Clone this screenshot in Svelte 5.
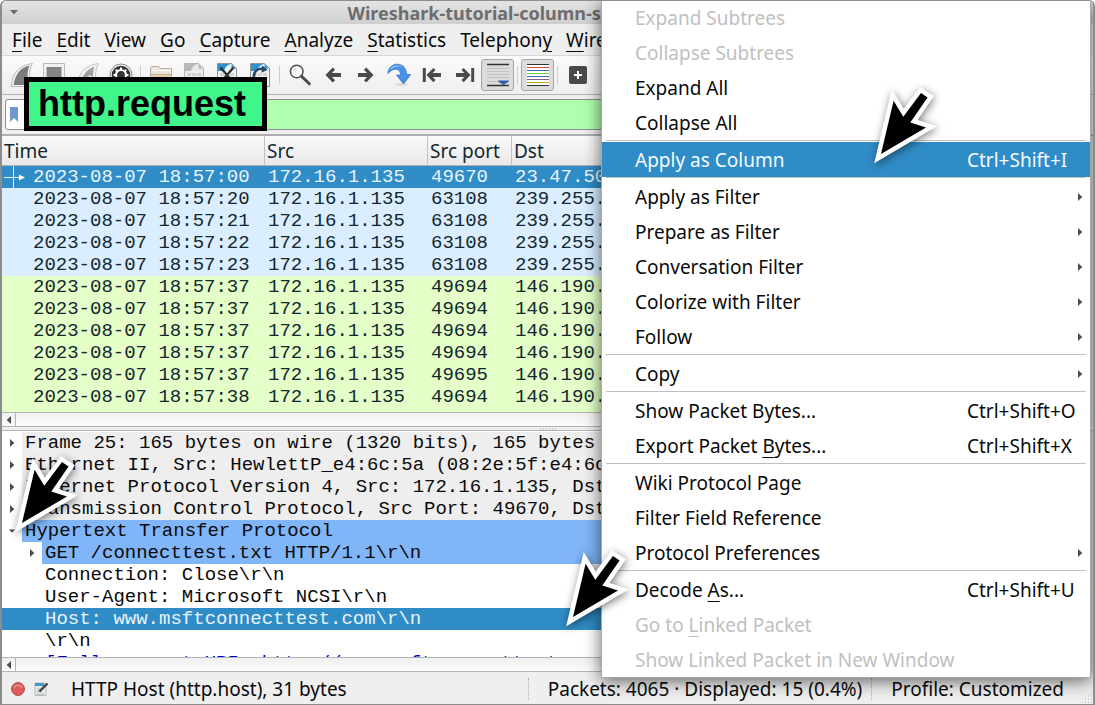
<script>
  const menus = [
    ['F', 'ile', ''], ['E', 'dit', ''], ['V', 'iew', ''], ['G', 'o', ''], ['C', 'apture', ''],
    ['A', 'nalyze', ''], ['S', 'tatistics', ''], ['y', '', 'Telephon'], ['W', 'ireless', '']
  ];

  const tools = [
    'start', 'stop', 'restart', 'options', '|', 'open', 'save', 'close', 'reload', '|',
    'find', 'back', 'forward', 'jump', 'first', 'last', 'autoscroll', '|', 'colorize', '|', 'add'
  ];

  const rows = [
    ['00', '49670', '23.47.50', 'sel'],
    ['20', '63108', '239.255.', 'udp'],
    ['21', '63108', '239.255.', 'udp'],
    ['22', '63108', '239.255.', 'udp'],
    ['23', '63108', '239.255.', 'udp'],
    ['37', '49694', '146.190.', 'http'],
    ['37', '49694', '146.190.', 'http'],
    ['37', '49694', '146.190.', 'http'],
    ['37', '49694', '146.190.', 'http'],
    ['37', '49695', '146.190.', 'http'],
    ['38', '49694', '146.190.', 'http']
  ];

  const tree = [
    { t: 'Frame 25: 165 bytes on wire (1320 bits), 165 bytes', k: 'proto', a: 'right' },
    { t: 'Ethernet II, Src: HewlettP_e4:6c:5a (08:2e:5f:e4:6c', k: 'proto', a: 'right' },
    { t: 'Internet Protocol Version 4, Src: 172.16.1.135, Dst', k: 'proto', a: 'right' },
    { t: 'Transmission Control Protocol, Src Port: 49670, Dst', k: 'proto', a: 'right' },
    { t: 'Hypertext Transfer Protocol', k: 'hit', a: 'down' },
    { t: 'GET /connecttest.txt HTTP/1.1\\r\\n', k: 'hit', a: 'right', d: 1 },
    { t: 'Connection: Close\\r\\n', k: '', d: 1 },
    { t: 'User-Agent: Microsoft NCSI\\r\\n', k: '', d: 1 },
    { t: 'Host: www.msftconnecttest.com\\r\\n', k: 'sel', d: 1 },
    { t: '\\r\\n', k: '', d: 1 },
    { t: '[Full request URI: http://www.msftconnecttest.com', k: 'link', d: 1 }
  ];

  // l: label, u: mnemonic letter, r: rest of the label
  const context = [
    { l: 'Expand Subtrees', off: true },
    { l: 'Collapse Subtrees', off: true },
    { l: 'Expand All' },
    { l: 'Collapse All' },
    null,
    { l: 'Apply as Column', key: 'Ctrl+Shift+I', on: true },
    null,
    { l: 'Apply as Filter', sub: true },
    { l: 'Prepare as Filter', sub: true },
    { l: 'Conversation Filter', sub: true },
    { l: 'Colorize with Filter', sub: true },
    { l: 'Follow', sub: true },
    null,
    { l: 'Copy', sub: true },
    null,
    { l: 'Show Packet Bytes...', key: 'Ctrl+Shift+O' },
    { l: 'Export Packet ', u: 'B', r: 'ytes...', key: 'Ctrl+Shift+X' },
    null,
    { l: 'Wiki Protocol Page' },
    { l: 'Filter Field Reference' },
    { l: 'Protocol Preferences', sub: true },
    null,
    { l: 'Decode ', u: 'A', r: 's...', key: 'Ctrl+Shift+U' },
    { l: 'Go to ', u: 'L', r: 'inked Packet', off: true },
    { l: 'Show Linked Packet in New Window', off: true }
  ];
</script>

{#snippet tri(dir)}
  <svg class="tri" width="6" height="8" viewBox="0 0 6 8" aria-hidden="true">
    {#if dir === 'right'}<path d="M1 0 5.300 4 1 8z" fill="#4c4c4c" />
    {:else if dir === 'left'}<path d="M5 0 .7 4 5 8z" fill="#4c4c4c" />
    {:else}<path d="M0 2.500h6L3 5.800z" fill="#4c4c4c" />{/if}
  </svg>
{/snippet}

{#snippet sheet(tint)}
  <path d="M2.500 .5h14l5 5v18h-19z" fill={tint === 'grey' ? '#ededed' : '#f3f5f2'} stroke={tint === 'grey' ? '#b4b4b4' : '#8b9499'} />
  <path d="M3 1h13.300l4.700 4.700V8H3z" fill={tint === 'grey' ? '#b9b9b9' : '#2d93c8'} />
  <path d="M9 8c1-3.500 3-6 6.500-7h1v4.500h4.500V8z" fill={tint === 'grey' ? '#e9e9e9' : '#e8f2f8'} />
  <path d="M6 10v3m2-3v3m3-3v3m2-3v3m3-3v3m2-3v3M6 15v3m2-3v3m3-3v3m2-3v3m3-3v3m2-3v3" stroke="#b0b0b0" />
{/snippet}

{#snippet arrow(flip)}
  <path transform={flip ? 'matrix(-1 0 0 1 24 0)' : null} d="M4.500 12 11.700 4.600l2.400 2.200-3.200 3.300H20v3.900h-9.100l3.200 3.300-2.400 2.200z" fill="#4b4b4b" />
{/snippet}

{#snippet pointer()}
  <path
    d="M12 72 24.600 18.700 34.300 34.700 52 11 58.600 15.400 41.300 40.400 57 45.400z"
    fill="#000" stroke="#fff" stroke-width="9" stroke-miterlimit="10" paint-order="stroke"
  />
{/snippet}

<main class="window">
  <header class="titlebar">
    <svg width="8" height="5" viewBox="0 0 8 5" aria-hidden="true"><path d="M0 0h8L4 4.600z" fill="#6c6c6c" /></svg>
    <h1>Wireshark-tutorial-column-setup-filters.pcap</h1>
  </header>

  <nav class="menubar">
    {#each menus as [u, rest, pre]}
      <button type="button">{pre}<u>{u}</u>{rest}</button>
    {/each}
  </nav>

  <div class="toolbar" role="toolbar" aria-label="Main toolbar">
    {#each tools as t}
      {#if t === '|'}
        <span class="sep"></span>
      {:else}
        <button type="button" aria-label={t} class:pressed={t === 'autoscroll' || t === 'colorize'}>
          <svg width="24" height="24" viewBox="0 0 24 24" fill="none" aria-hidden="true">
            {#if t === 'start'}
              <path d="M1 23.500C2.500 10 9 2 22.500.5 19 6 18.500 16 22 23.500z" fill="#f2f2f2" stroke="#b9b9b9" />
              <path d="M3.500 22C5.500 11 10 5 19.500 2.500 17 8 17 15 19 22z" fill="#7c7c7c" />
            {:else if t === 'stop'}
              <path d="M.5.5h21v23H.5z" fill="#f2f2f2" stroke="#b9b9b9" />
              <path d="M3.500 4h15v17h-15z" fill="#848484" />
            {:else if t === 'restart'}
              <path d="M1 23.500C2.500 10 9 2 22.500.5 19 6 18.500 16 22 23.500z" fill="#f2f2f2" stroke="#c4c4c4" />
              <path d="M4 21C6 13 11 6 18.500 3.500 17 7 17 12 17 15c-1-2-3-3-4.500-2.500l.5 3.500-6-1z" fill="#a0a0a0" />
            {:else if t === 'options'}
              <circle cx="12" cy="12" r="11" fill="#f4f4f4" stroke="#8a8a8a" />
              <circle cx="12" cy="12" r="9.300" fill="#333" />
              <circle cx="12" cy="12" r="5" stroke="#fff" stroke-width="2.200" />
              <path d="M12 4.500v3m0 9v3M4.500 12h3m9 0h3M6.700 6.700l2.100 2.100m6.400 6.400 2.100 2.100m0-10.600-2.100 2.100m-6.400 6.400-2.100 2.100" stroke="#fff" stroke-width="2" />
            {:else if t === 'open'}
              <path d="M1.500 22V4.500l1-1h7l2 2h11V22z" fill="#ece4d6" stroke="#b5aea4" />
              <path d="M3 7.500h18.500" stroke="#fff" />
              <path d="M2 11h20v11H2z" fill="#e3cfa8" />
              <path d="M2 11.500h20" stroke="#c9b48c" />
            {:else if t === 'save'}
              {@render sheet('grey')}
            {:else if t === 'close'}
              {@render sheet('blue')}
              <path d="m5.500 4.500 13 15m0-15-13 15" stroke="#2b3338" stroke-width="2.400" />
            {:else if t === 'reload'}
              {@render sheet('blue')}
              <path d="M17.500 7C11 3.500 5 8 6 15l3 4" stroke="#27476b" stroke-width="2.600" />
              <path d="m14 2.500 5.500 4.200-6 3z" fill="#27476b" />
            {:else if t === 'find'}
              <circle cx="8.700" cy="8.500" r="6.300" fill="#fafafa" stroke="#555" stroke-width="1.600" />
              <path d="M5.500 7.500c.5-1.500 1.500-2.300 3-2.500" stroke="#bbb" />
              <path d="m13.500 13.200 7.800 7.600" stroke="#484848" stroke-width="3" stroke-linecap="round" />
            {:else if t === 'back'}
              {@render arrow(false)}
            {:else if t === 'forward'}
              {@render arrow(true)}
            {:else if t === 'jump'}
              <ellipse cx="14" cy="21.500" rx="7" ry="1.500" fill="#dcdcdc" />
              <path d="M.8 10.500C1.500 4.500 5.500 1 10.500 1.200c5.500.2 9 4.500 9.200 10.300h4L16.500 21l-7-9h4c0-3.500-1.500-5.500-4.500-5.700C6 6 4 7.500.8 10.500z" fill="#4a92e6" stroke="#2c6fc4" stroke-width=".7" />
              <path d="M2.500 7.500C5 2 12 .7 16 5c-4-2.500-9-2-13.500 2.500z" fill="#a3cbf7" />
            {:else if t === 'first'}
              <path d="M4.300 5v14" stroke="#4b4b4b" stroke-width="3" />
              <path d="M6.500 12 13.300 4.900l2.300 2.100-3 3.100H21v3.900h-8.400l3 3.100-2.300 2.100z" fill="#4b4b4b" />
            {:else if t === 'last'}
              <path d="M19.700 5v14" stroke="#4b4b4b" stroke-width="3" />
              <path d="M17.500 12 10.700 4.900 8.400 7l3 3.100H3v3.900h8.400l-3 3.100 2.300 2.100z" fill="#4b4b4b" />
            {:else if t === 'autoscroll'}
              <path d="M1 1.500h22m-22 21h22" stroke="#2e3436" stroke-width="1.500" />
              <path d="M1 5.500h22m-22 3h22m-22 3h22m-22 3h22m-22 4h22" stroke="#c3c4bf" />
              <path d="M12 17.500h11c-.5 2-2 2.500-3.500 3l-2 2-2-2c-1.500-.5-3-1-3.500-3z" fill="#2f5fa6" />
            {:else if t === 'colorize'}
              <path d="M1 2h22v20H1z" fill="#fff" />
              <path d="M1 1.500h22m-22 21h22" stroke="#2e3436" />
              <path d="M1 4.500h22" stroke="#dd4040" />
              <path d="M1 7.500h22" stroke="#3f69b0" />
              <path d="M1 10.500h22" stroke="#74d12f" />
              <path d="M1 13.500h22" stroke="#3f69b0" />
              <path d="M1 16.500h22" stroke="#86628f" />
              <path d="M1 19.500h22" stroke="#cfa52a" />
            {:else}
              <rect x="3" y="3" width="18" height="18" rx="2" fill="#4a4a4a" />
              <path d="M12 8v8m-4-4h8" stroke="#fff" stroke-width="2" />
            {/if}
          </svg>
        </button>
      {/if}
    {/each}
  </div>

  <div class="filter">
    <div class="field">
      <svg width="8" height="15" viewBox="0 0 8 15" aria-hidden="true"><path d="M0 0h8v15L4 11 0 15z" fill="#7096cf" /></svg>
      <input type="text" aria-label="Display filter" />
    </div>
    <strong class="callout">http.request</strong>
  </div>

  <section class="packets">
    <div class="view">
      <table>
        <colgroup><col class="c-time" /><col class="c-src" /><col class="c-port" /><col /></colgroup>
        <thead><tr><th>Time</th><th>Src</th><th>Src port</th><th>Dst</th></tr></thead>
        <tbody>
          {#each rows as [sec, port, dst, kind]}
            <tr class={kind}>
              <td>
                <div class="time">
                  <svg width="28" height="22" viewBox="0 0 28 22" aria-hidden="true">
                    {#if kind === 'sel'}
                      <path d="M11.500 0v22M2 11.500h16" stroke="#e8f4fc" />
                      <path d="M17 8.500 23 11.500 17 14.500z" fill="#fff" />
                    {/if}
                  </svg>2023-08-07 18:57:{sec}
                </div>
              </td>
              <td>172.16.1.135</td>
              <td>{port}</td>
              <td>{dst}</td>
            </tr>
          {/each}
        </tbody>
      </table>
    </div>
    <div class="scroll"><span>{@render tri('left')}</span></div>
  </section>

  <div class="splitter"><svg width="18" height="2" viewBox="0 0 18 2" aria-hidden="true"><path d="M1 1h16" stroke="#a8a8a8" stroke-dasharray="1 2" /></svg></div>

  <section class="details">
    <div class="view" role="tree" aria-label="Packet details">
      {#each tree as n}
        <div class="node {n.k}" role="treeitem" aria-selected={n.k === 'sel'}>
          {#if n.d}<span class="gutter"></span>{/if}
          <span class="gutter">{#if n.a}{@render tri(n.a)}{/if}</span>
          <span class="label">{n.t}</span>
        </div>
      {/each}
    </div>
    <div class="scroll"><span>{@render tri('left')}</span></div>
  </section>

  <footer class="status">
    <svg width="14" height="14" viewBox="0 0 14 14" aria-hidden="true">
      <circle cx="7" cy="7" r="6.400" fill="#e05c5c" stroke="#9c4a4a" />
      <path d="M3 5.500a4.500 4 0 0 1 8 0" fill="none" stroke="#ee9090" stroke-width="1.500" />
    </svg>
    <svg width="14" height="14" viewBox="0 0 14 14" aria-hidden="true">
      <path d="M1 1h11v12.500H1z" fill="#e9ebe6" stroke="#b5bab5" />
      <path d="M1 1h9v3H1z" fill="#3d9ccb" />
      <path d="M3 7h6M3 9.500h5M3 12h7" stroke="#aeb3ae" />
      <path d="m12.300 2.500-6.800 7" stroke="#3b4245" stroke-width="2.500" />
      <path d="M13.500 1.500 12 3" stroke="#3b4245" stroke-width="2" />
    </svg>
    <span class="field-name">HTTP Host (http.host), 31 bytes</span>
    <span class="counts">Packets: 4065 · Displayed: 15 (0.4%)</span>
    <span class="profile">Profile: Customized</span>
    <svg class="grip" width="12" height="12" viewBox="0 0 12 12" aria-hidden="true">
      <path d="M10 1h1M7 4h1m2 0h1M4 7h1m2 0h1m2 0h1M1 10h1m2 0h1m2 0h1m2 0h1" stroke="#b4b4b4" />
    </svg>
  </footer>

  <div class="context" role="menu">
    {#each context as m}
      {#if m}
        <button type="button" role="menuitem" class:on={m.on} disabled={m.off}>
          <span>{m.l}{#if m.u}<u>{m.u}</u>{m.r}{/if}</span>
          {#if m.key}<kbd>{m.key}</kbd>{/if}
          {#if m.sub}{@render tri('right')}{/if}
        </button>
      {:else}
        <hr />
      {/if}
    {/each}
  </div>

  {#each ['column', 'tree', 'host'] as p}
    <svg class="pointer p-{p}" width="76" height="90" viewBox="0 0 76 90" aria-hidden="true">{@render pointer()}</svg>
  {/each}
</main>

<style>
  :global(body) {
    margin: 0;
    background: #fff;
  }
  .window {
    position: relative;
    box-sizing: border-box;
    height: 100vh;
    overflow: hidden;
    display: flex;
    flex-direction: column;
    border: 1px solid #8c8c8c;
    border-left-width: 2px;
    border-right-width: 2px;
    border-radius: 6px 6px 0 0;
    background: #efefef;
    color: #0a0a0a;
    font: 19px/22px "Noto Sans", sans-serif;
  }
  button {
    appearance: none;
    border: 0;
    margin: 0;
    padding: 0;
    background: none;
    color: inherit;
    font: inherit;
    white-space: nowrap;
  }
  u {
    text-underline-offset: 4px;
    text-decoration-thickness: 1px;
  }
  .titlebar {
    flex: none;
    height: 23px;
    display: flex;
    align-items: center;
    padding: 0 14px 0 8px;
    background: linear-gradient(#e4e4e4, #cfcfcf);
  }
  h1 {
    flex: 1;
    margin: 0;
    text-align: center;
    color: #6d6d6d;
    font: bold 18px/22px "Noto Sans", sans-serif;
  }
  .menubar {
    flex: none;
    height: 32px;
    display: flex;
    gap: 14px;
    padding-left: 10px;
    box-sizing: border-box;
    border-bottom: 1px solid #d8d8d8;
    overflow: hidden;
  }
  .toolbar {
    flex: none;
    height: 38px;
    display: flex;
    align-items: center;
    padding-left: 3px;
    border-bottom: 1px solid #b4b4b4;
    background: linear-gradient(#fafafa, #efefef);
  }
  .toolbar button {
    width: 33px;
    height: 32px;
    display: grid;
    place-items: center;
  }
  .toolbar .pressed {
    border: 1px solid #a6a6a6;
    border-radius: 3px;
    background: #dcdcdc;
  }
  .sep {
    width: 7px;
    height: 18px;
    background: linear-gradient(#cdcdcd, #cdcdcd) center / 1px 100% no-repeat;
  }
  .filter {
    position: relative;
    flex: none;
    padding: 4px 3px;
    border-bottom: 2px solid #b0b0b0;
  }
  .field {
    display: flex;
    align-items: center;
    border: 1px solid #8e8e8e;
    border-radius: 3px;
    background: #fff;
    padding-left: 4px;
    gap: 6px;
  }
  input {
    flex: 1;
    box-sizing: border-box;
    height: 29px;
    border: 0;
    padding: 0 4px;
    background: #afffaf;
    font: inherit;
  }
  .callout {
    position: absolute;
    left: 22px;
    top: -18px;
    border: 5px solid #000;
    padding: 0 16px 0 9px;
    background: #40f589;
    color: #000;
    font: bold 36px/44px "Liberation Sans", sans-serif;
  }
  .packets,
  .details {
    min-height: 0;
    display: flex;
    flex-direction: column;
    padding-right: 14px;
    background: #e2e2e2;
    font: 19px/22px "Liberation Mono", monospace;
  }
  .packets {
    flex: 291 1 0;
  }
  .details {
    flex: 241 1 0;
  }
  .view {
    flex: 1;
    min-height: 0;
    overflow: hidden;
    background: #fff;
  }
  .packets .view {
    background: #e4ffc7;
  }
  table {
    width: 100%;
    table-layout: fixed;
    border-collapse: separate;
    border-spacing: 0;
  }
  .c-time {
    width: 263px;
  }
  .c-src {
    width: 163px;
  }
  .c-port {
    width: 84px;
  }
  th {
    height: 30px;
    box-sizing: border-box;
    padding: 0 2px;
    border-right: 1px solid #c2c2c2;
    border-bottom: 1px solid #b0b0b0;
    background: linear-gradient(#fafafa, #e9e9e9);
    text-align: left;
    font: 19px/22px "Noto Sans", sans-serif;
  }
  td {
    height: 22px;
    padding: 0 3px;
    overflow: hidden;
    white-space: nowrap;
  }
  .time {
    display: flex;
  }
  .time svg {
    margin-left: -3px;
    margin-right: 3px;
  }
  tr {
    color: #12272e;
  }
  tr.udp {
    background: #daeeff;
  }
  tr.http {
    background: #e4ffc7;
  }
  tr.sel,
  .node.sel {
    background: #308cc6;
    color: #e8f4fc;
  }
  .scroll {
    flex: none;
    height: 13px;
    border-top: 1px solid #b4b4b4;
    border-bottom: 1px solid #b4b4b4;
    background: linear-gradient(#efefef, #fcfcfc);
  }
  .scroll span {
    display: flex;
    align-items: center;
    justify-content: center;
    width: 13px;
    height: 13px;
    border-right: 1px solid #b4b4b4;
  }
  .splitter {
    flex: none;
    height: 3px;
    display: flex;
    align-items: center;
    justify-content: center;
    border-bottom: 1px solid #b4b4b4;
  }
  .node {
    display: flex;
    height: 22px;
    white-space: pre;
  }
  .details .view {
    padding-top: 1px;
  }
  .gutter {
    flex: none;
    width: 20px;
    display: grid;
    place-items: center;
  }
  .label {
    flex: 1;
    padding-left: 3px;
  }
  .proto .label {
    background: #eee;
  }
  .hit .label {
    background: #80b5f7;
  }
  .link {
    color: #00c;
  }
  .status {
    flex: none;
    height: 32px;
    box-sizing: border-box;
    display: flex;
    align-items: center;
    gap: 9px;
    padding: 1px 0 0 9px;
    white-space: nowrap;
  }
  .field-name {
    flex: 1;
    padding-left: 14px;
  }
  .counts,
  .profile {
    border-left: 1px dotted #b0b0b0;
    padding-left: 19px;
  }
  .profile {
    padding-right: 8px;
  }
  .grip {
    align-self: flex-end;
  }
  .context {
    position: absolute;
    top: -1px;
    right: 2px;
    width: 488px;
    border: solid #a8a8a8;
    border-width: 0 1px 1px;
    background: #fff;
    box-shadow: 0 3px 16px rgba(0, 0, 0, 0.6);
  }
  .context button {
    width: 100%;
    height: 35px;
    display: flex;
    align-items: center;
    justify-content: space-between;
    padding: 0 7px 0 33px;
  }
  .context button:disabled {
    color: #c0c0c0;
  }
  .context .on {
    background: #308cc6;
    color: #f4faff;
  }
  kbd {
    width: 116px;
    text-align: left;
    font: inherit;
  }
  hr {
    margin: 0 4px 1px;
    border: 0;
    height: 1px;
    background: #c0c0c0;
  }
  .pointer {
    position: absolute;
    filter: drop-shadow(1px 2px 4px rgba(0, 0, 0, 0.5));
  }
  .p-column {
    left: 867px;
    top: 81px;
  }
  .p-tree {
    left: 8px;
    top: 450px;
  }
  .p-host {
    left: 559px;
    top: 544px;
  }
</style>
